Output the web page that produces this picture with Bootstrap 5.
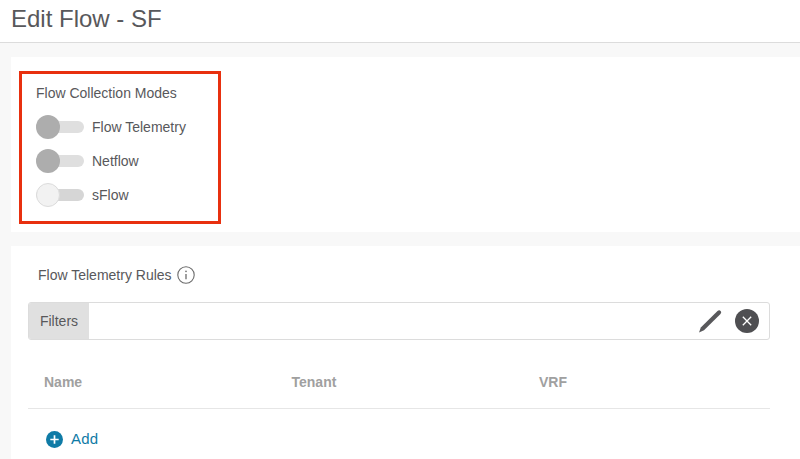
<!DOCTYPE html>
<html lang="en">
<head>
<meta charset="utf-8">
<title>Edit Flow - SF</title>
<link href="https://cdn.jsdelivr.net/npm/bootstrap@5.3.0/dist/css/bootstrap.min.css" rel="stylesheet">
<style>
html,body{height:459px;overflow:hidden}
body{background:#f8f8f8;font-family:"Liberation Sans",Arial,sans-serif;color:#58585b}
.page-head{height:43px;background:#fff;border-bottom:1px solid #dcdcdc;padding-left:11px;font-size:24px;line-height:37px;color:#58585b}
.page-body{padding:14px 0 0 11px}
.panel-top{height:175px;background:#fff;padding:14px 0 0 8px}
.mode-box{width:202px;height:153px;border:3px solid #e8300f;padding:10px 0 0 14px}
.mode-title{font-size:14px;line-height:18px;margin-bottom:8px}
.mode-row{height:34px;font-size:14px;gap:8px}
.tog{width:48px;height:24px;position:relative;flex:none}
.tog::before{content:"";position:absolute;left:0;right:0;top:6px;height:12px;border-radius:6px;background:#dfdfdf}
.tog i{position:absolute;left:0;top:0;width:24px;height:24px;border-radius:50%;background:#adadad}
.tog.off::before{background:#d6d6d6}
.tog.off i{background:#f2f2f2;border:1px solid #dcdcdc}
.panel-rules{margin-top:14px;height:227px;background:#fff;padding:0 30px 0 17px}
.rules-title{height:56px;padding:2px 0 0 10px;font-size:14px;gap:5px}
.filter-bar{height:38px;border:1px solid #dcdcdc;border-radius:3px;background:#fff}
.filter-tag{width:60px;background:#e0e0e0;font-size:14px;color:#58585b;border-radius:2px 0 0 2px}
.filter-tools{gap:13px;padding-right:10px}
.head-row{height:69px;padding:16px 0 0 16px;border-bottom:1px solid #e6e6e6;font-size:14px;font-weight:700;color:#a0a0a0}
.head-row span{flex:0 0 247.5px}
.add-row{height:60px;padding-left:18px;gap:8px;font-size:15px;letter-spacing:.2px;color:#0f7ba6}
</style>
</head>
<body>
<header class="page-head">Edit Flow - SF</header>
<main class="page-body">
  <section class="panel-top">
    <div class="mode-box">
      <div class="mode-title">Flow Collection Modes</div>
      <div class="mode-row d-flex align-items-center"><span class="tog"><i></i></span>Flow Telemetry</div>
      <div class="mode-row d-flex align-items-center"><span class="tog"><i></i></span>Netflow</div>
      <div class="mode-row d-flex align-items-center"><span class="tog off"><i></i></span>sFlow</div>
    </div>
  </section>
  <section class="panel-rules">
    <div class="rules-title d-flex align-items-center">Flow Telemetry Rules
      <svg width="18" height="18" viewBox="0 0 18 18" fill="none" stroke="#6b6b6b"><circle cx="9" cy="9" r="8.2" stroke-width="1.1"/><path d="M9 8v5.2" stroke-width="1.3"/><circle cx="9" cy="5.4" r=".8" fill="#6b6b6b" stroke="none"/></svg>
    </div>
    <div class="filter-bar d-flex align-items-stretch">
      <div class="filter-tag d-flex align-items-center justify-content-center">Filters</div>
      <div class="flex-grow-1"></div>
      <div class="filter-tools d-flex align-items-center">
        <svg width="24" height="24" viewBox="0 0 24 24"><path d="M1 23.5 2.8 18.5 19.5 2Q21.2.8 22.6 1.9T22.5 5L6 21.2Z" fill="#58585b"/></svg>
        <svg width="24" height="24" viewBox="0 0 24 24"><circle cx="12" cy="12" r="12" fill="#4f4f52"/><path d="M7.8 7.8l8.4 8.4M16.2 7.8l-8.4 8.4" stroke="#fff" stroke-width="1.3"/></svg>
      </div>
    </div>
    <div class="head-row d-flex align-items-center"><span>Name</span><span>Tenant</span><span>VRF</span></div>
    <div class="add-row d-flex align-items-center">
      <svg width="17" height="17" viewBox="0 0 17 17"><circle cx="8.5" cy="8.5" r="8.5" fill="#0f7ba6"/><path d="M8.5 4.3v8.4M4.3 8.5h8.4" stroke="#fff" stroke-width="1.7"/></svg>
      <span>Add</span>
    </div>
  </section>
</main>
<script src="https://cdn.jsdelivr.net/npm/bootstrap@5.3.0/dist/js/bootstrap.bundle.min.js"></script>
</body>
</html>
